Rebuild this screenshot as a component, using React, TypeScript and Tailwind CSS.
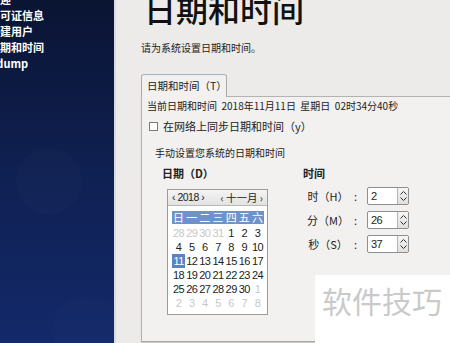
import React from 'react';

const CJK = '"Noto Sans CJK SC", "Noto Sans", sans-serif';

const sideItems = ['欢迎', '许可证信息', '创建用户', '日期和时间', 'Kdump'];

const weekdays = ['日', '一', '二', '三', '四', '五', '六'];

const days: { d: number; muted?: boolean }[] = [
  { d: 28, muted: true }, { d: 29, muted: true }, { d: 30, muted: true }, { d: 31, muted: true },
  ...Array.from({ length: 30 }, (_, i) => ({ d: i + 1 })),
  { d: 1, muted: true }, { d: 2, muted: true }, { d: 3, muted: true }, { d: 4, muted: true },
  { d: 5, muted: true }, { d: 6, muted: true }, { d: 7, muted: true }, { d: 8, muted: true },
];

function Spin({ value }: { value: string }) {
  return (
    <div className="flex h-[18px] w-[42px] rounded-[2px] border border-[#8e8e8e] bg-white overflow-hidden">
      <div className="flex-1 pl-[3px] text-[11px] leading-[16px] tracking-[-0.5px] text-[#222]" style={{ fontFamily: '"Liberation Sans", sans-serif' }}>
        {value}
      </div>
      <div className="w-[11px] border-l border-[#b4b4b4] bg-gradient-to-b from-[#f6f6f6] to-[#dedede] flex flex-col items-center justify-center gap-[2px]">
        <svg width="7" height="4" viewBox="0 0 7 4"><path d="M0.5 3.5 L3.5 0.5 L6.5 3.5" fill="none" stroke="#333" strokeWidth="1" /></svg>
        <svg width="7" height="4" viewBox="0 0 7 4"><path d="M0.5 0.5 L3.5 3.5 L6.5 0.5" fill="none" stroke="#333" strokeWidth="1" /></svg>
      </div>
    </div>
  );
}

function TimeRow({ label, value }: { label: string; value: string }) {
  return (
    <div className="flex items-center h-[18px]">
      <div className="w-[50px] text-center text-[11px] text-[#222]">{label}</div>
      <div className="w-[14px] text-[11px] text-[#222] pl-[1px]">:</div>
      <Spin value={value} />
    </div>
  );
}

export default function App() {
  return (
    <div className="relative flex w-[450px] h-[343px] overflow-hidden bg-[#ecebe9]" style={{ fontFamily: CJK }}>
      <aside className="relative w-[116px] h-full shrink-0 overflow-hidden border-r-2 border-[#d9dbe2] bg-gradient-to-b from-[#0a1433] via-[#0f2052] to-[#13296a]">
        {/* faint bokeh circles */}
        <div className="absolute left-[16px] top-[148px] w-[66px] h-[66px] rounded-full bg-white/[0.015]" />
        <div className="absolute left-[52px] top-[296px] w-[70px] h-[70px] rounded-full bg-white/[0.012]" />
        <ul className="mt-[-9px] ml-[-11px] text-white font-bold text-[11px] leading-[16px] whitespace-nowrap">
          {sideItems.map((s) => (
            <li key={s}>{s}</li>
          ))}
        </ul>
      </aside>

      <main className="flex-1 pl-[25px]">
        <h1 className="mt-[-12px] ml-[3px] text-[32px] leading-[40px] font-medium text-[#111] whitespace-nowrap">日期和时间</h1>
        <p className="mt-[13px] text-[10px] leading-[14px] text-[#222]">请为系统设置日期和时间。</p>

        <div className="mt-[19px] w-[330px]">
          <div className="relative z-10 mb-[-1px] w-[86px] h-[23px] rounded-t-[3px] border border-b-0 border-[#a9a9a9] border-t-[#9fb1c9] bg-[#f2f1ef] pl-[5px] text-[10.5px] leading-[22px] text-[#222] whitespace-nowrap">
            日期和时间（T）
          </div>
          <div className="h-[246px] border border-[#b3b3b3] border-b-[#a8a8a8] bg-[#f2f1ef] pl-[5px] pt-[2px] shadow-[0_1px_1px_rgba(0,0,0,0.15)]">
            <div className="text-[10px] leading-[14px] text-[#222] whitespace-nowrap">
              当前日期和时间&nbsp;&nbsp;2018年11月11日&nbsp;&nbsp;星期日&nbsp;&nbsp;02时34分40秒
            </div>
            <div className="mt-[6px] flex items-center h-[14px] text-[11px] text-[#222] whitespace-nowrap">
              <span className="ml-[2px] w-[9px] h-[9px] border border-[#7a7a7a] bg-white" />
              <span className="ml-[5px]">在网络上同步日期和时间（y）</span>
            </div>

            <div className="ml-[8px] mt-[13px] text-[10px] leading-[14px] text-[#222]">手动设置您系统的日期和时间</div>

            <div className="flex mt-[6px] ml-[15px]">
              <div className="w-[141px]">
                <div className="text-[11px] leading-[14px] font-bold text-[#222]">日期（D）</div>
                <div className="mt-[9px] ml-[5px] w-[101px] h-[126px] border border-[#9c9c9c] bg-white">
                  <div className="h-[16px] flex items-center justify-between px-[4px] bg-gradient-to-b from-[#f4f4f4] to-[#e2e2e2] border-b border-[#b8b8b8] text-[10.5px] text-[#222] whitespace-nowrap">
                    <span style={{ fontFamily: '"Liberation Sans", sans-serif' }} className="tracking-[-0.5px]">‹ 2018 ›</span>
                    <span>‹ 十一月 ›</span>
                  </div>
                  <div className="mt-[5px] ml-[4px] w-[92px] h-[13px] grid grid-cols-7 bg-[#6d93c8] text-white text-[11px] leading-[13px] text-center">
                    {weekdays.map((w) => (
                      <span key={w}>{w}</span>
                    ))}
                  </div>
                  <div className="mt-[2px] ml-[4px] w-[92px] grid grid-cols-7 text-[11px] leading-[14px] text-center tracking-[-0.6px]" style={{ fontFamily: '"Liberation Sans", sans-serif' }}>
                    {days.map((x, i) => (
                      <span
                        key={i}
                        className={
                          x.d === 11 && !x.muted
                            ? 'bg-[#5a83c1] text-white'
                            : x.muted
                              ? 'text-[#c8c8c8]'
                              : 'text-[#1c1c1c]'
                        }
                      >
                        {x.d}
                      </span>
                    ))}
                  </div>
                </div>
              </div>

              <div>
                <div className="text-[11px] leading-[14px] font-bold text-[#222]">时间</div>
                <div className="mt-[7px] flex flex-col gap-[6px]">
                  <TimeRow label="时（H）" value="2" />
                  <TimeRow label="分（M）" value="26" />
                  <TimeRow label="秒（S）" value="37" />
                </div>
              </div>
            </div>
          </div>
        </div>
      </main>

      <div className="absolute left-[315px] top-[275px] right-0 bottom-0 bg-white pl-[7px] pt-[7px]">
        <span className="text-[30px] leading-[36px] text-[#cacaca] whitespace-nowrap">软件技巧</span>
      </div>
    </div>
  );
}
